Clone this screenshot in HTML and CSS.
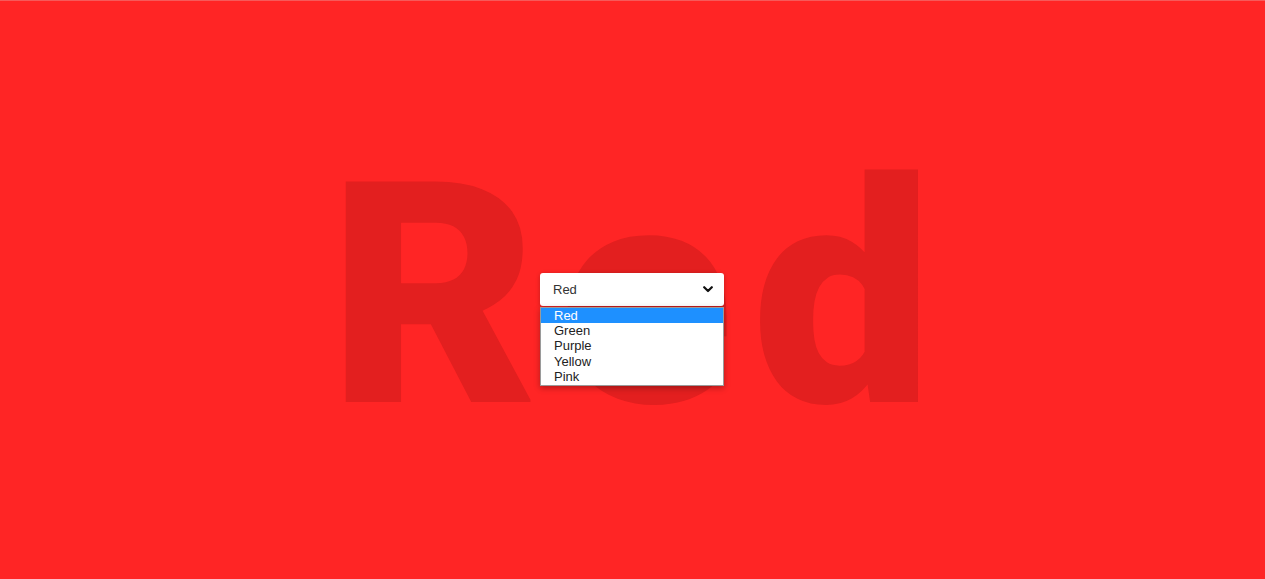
FILE: index.html
```html
<!DOCTYPE html>
<html lang="en">
<head>
<meta charset="utf-8">
<title>Red</title>
<link rel="stylesheet" href="styles.css">
</head>
<body>
<main class="stage">
  <h1 class="word">Red</h1>
  <div class="picker">
    <div class="select">
      <span class="select-value">Red</span>
      <svg class="chevron" width="10" height="7" viewBox="0 0 10 7"><path d="M1.2 1.2 L5 5 L8.8 1.2" fill="none" stroke="#111" stroke-width="2.2" stroke-linecap="round" stroke-linejoin="round"/></svg>
    </div>
    <ul class="options">
      <li class="option is-active">Red</li>
      <li class="option">Green</li>
      <li class="option">Purple</li>
      <li class="option">Yellow</li>
      <li class="option">Pink</li>
    </ul>
  </div>
</main>
</body>
</html>
```
FILE: styles.css
```css
html, body {
  margin: 0;
  padding: 0;
}
body {
  background: #ff2525;
  border-top: 1px solid #f65a5a;
  box-sizing: border-box;
  height: 100vh;
  overflow: hidden;
  font-family: "Liberation Sans", Arial, sans-serif;
}
.stage {
  height: 100%;
  display: grid;
  place-items: center;
}
.word {
  grid-area: 1 / 1;
  margin: 11px 0 0 0;
  padding-left: 15px;
  font-family: Roboto, sans-serif;
  font-weight: 900;
  font-size: 310px;
  line-height: 1;
  color: #e31f1f;
  letter-spacing: 18px;
  transform: scaleX(1.04);
}
.picker {
  grid-area: 1 / 1;
  position: relative;
  width: 184px;
  margin: -1px 0 0 -1px;
}
.select {
  height: 33px;
  background: #fff;
  border-radius: 3px;
  box-shadow: 0 1px 4px rgba(0,0,0,0.25);
  display: flex;
  align-items: center;
  justify-content: space-between;
  padding: 0 11px 0 13px;
  box-sizing: border-box;
  font-size: 13px;
  color: #333;
}
.chevron {
  display: block;
}
.options {
  position: absolute;
  top: 34px;
  left: 0;
  right: 0;
  margin: 0;
  padding: 0 0 1px;
  list-style: none;
  background: #fff;
  border: 1px solid #9a9a9a;
  box-shadow: 0 2px 6px rgba(0,0,0,0.3);
  font-size: 13px;
  color: #222;
}
.option {
  height: 15.2px;
  line-height: 15px;
  padding-left: 13px;
}
.option.is-active {
  background: #1e90ff;
  color: #fff;
}
```
